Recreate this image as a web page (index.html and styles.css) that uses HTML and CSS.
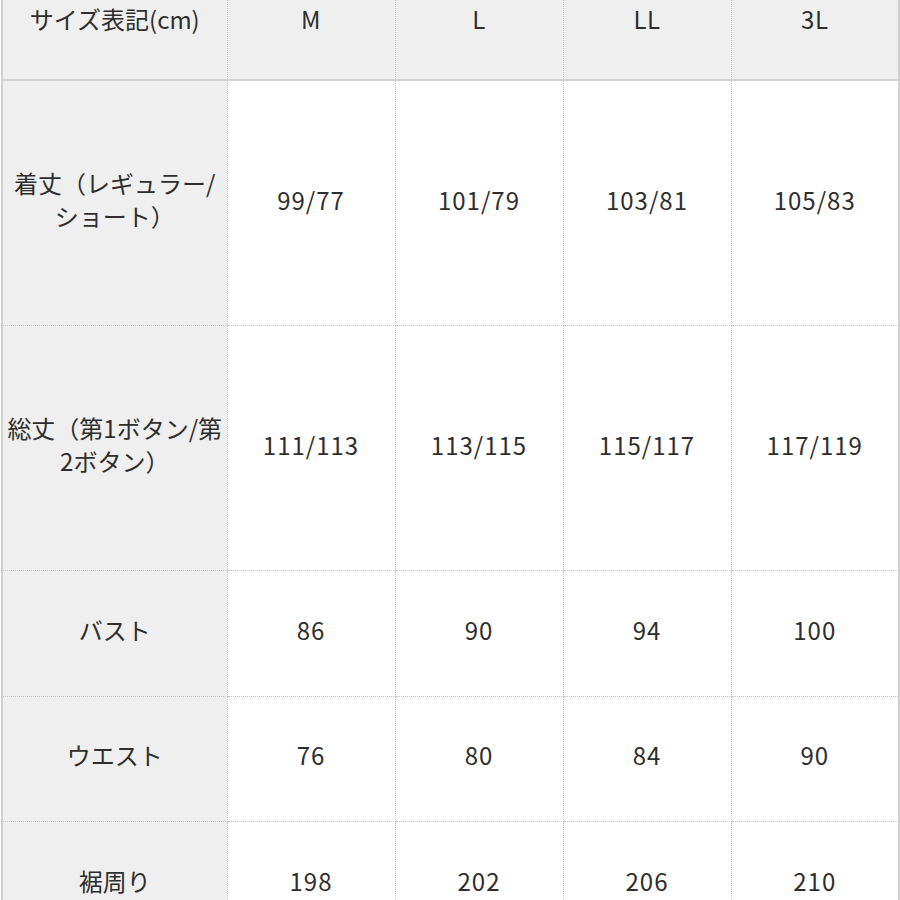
FILE: index.html
```html
<!DOCTYPE html>
<html lang="ja">
<head>
<meta charset="utf-8">
<link rel="stylesheet" href="styles.css">
</head>
<body>
<table class="size-table">
  <colgroup>
    <col class="col-label">
    <col class="col-size">
    <col class="col-size">
    <col class="col-size">
    <col class="col-size">
  </colgroup>
  <thead>
    <tr class="row-head">
      <th class="label">サイズ表記(cm)</th>
      <th>M</th>
      <th>L</th>
      <th>LL</th>
      <th>3L</th>
    </tr>
  </thead>
  <tbody>
    <tr class="row-tall">
      <th class="label">着丈（レギュラー/<br>ショート）</th>
      <td>99/77</td>
      <td>101/79</td>
      <td>103/81</td>
      <td>105/83</td>
    </tr>
    <tr class="row-tall">
      <th class="label">総丈（第1ボタン/第<br>2ボタン）</th>
      <td>111/113</td>
      <td>113/115</td>
      <td>115/117</td>
      <td>117/119</td>
    </tr>
    <tr class="row-mid">
      <th class="label">バスト</th>
      <td>86</td>
      <td>90</td>
      <td>94</td>
      <td>100</td>
    </tr>
    <tr class="row-mid">
      <th class="label">ウエスト</th>
      <td>76</td>
      <td>80</td>
      <td>84</td>
      <td>90</td>
    </tr>
    <tr class="row-mid">
      <th class="label">裾周り</th>
      <td>198</td>
      <td>202</td>
      <td>206</td>
      <td>210</td>
    </tr>
  </tbody>
</table>
</body>
</html>
```

FILE: styles.css
```css
html, body {
  margin: 0;
  padding: 0;
  background: #ffffff;
  overflow: hidden;
}

.size-table {
  border-collapse: collapse;
  table-layout: fixed;
  width: 897px;
  margin-left: 1px;
  font-family: "Noto Sans CJK JP", "Noto Sans", sans-serif;
  font-size: 24px;
  color: #2e2e2e;
  border-left: 2px solid #cfcfcf;
  border-right: 2px solid #cfcfcf;
}

.col-label { width: 225px; }
.col-size { width: 168px; }

.size-table th,
.size-table td {
  font-weight: normal;
  text-align: center;
  vertical-align: middle;
  padding: 0 4px 8px;
  line-height: 33px;
  white-space: nowrap;
  border: 1px dotted #c4c4c4;
}

.size-table th {
  background: #efefef;
}

.size-table td {
  background: #ffffff;
  letter-spacing: 1px;
}

.row-head th {
  height: 77px;
  vertical-align: top;
  padding-top: 2px;
  padding-bottom: 0;
  letter-spacing: 0.5px;
  border-top: none;
  border-bottom: 2px solid #d2d2d2;
}

.row-tall th,
.row-tall td {
  height: 236px;
}

.row-mid th,
.row-mid td {
  height: 116.5px;
}

.size-table .label {
  padding-left: 2px;
  padding-right: 2px;
  letter-spacing: 0;
}
```
